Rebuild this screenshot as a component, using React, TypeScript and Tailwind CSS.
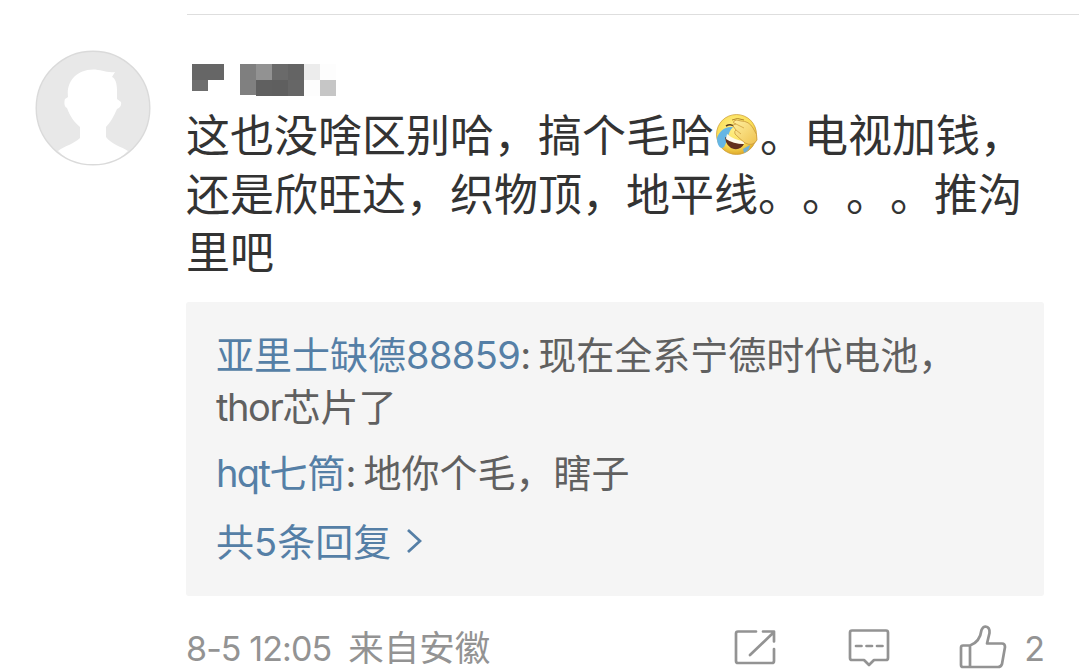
import type { ReactNode } from 'react';

interface ReplyProps {
  name: ReactNode;
  children: ReactNode;
}

// Shades of the pixelated user name, two rows of 16px cells
const NAME_CELLS = [
  'bg-[#666666]', 'bg-[#666666]', 'bg-white', 'bg-[#7f7f7f]', 'bg-[#929292]', 'bg-[#6a6a6a]', 'bg-[#646464]', 'bg-[#ececec]', 'bg-[#fdfdfd]',
  'bg-[#6e6e6e] h-[11px]', 'bg-white', 'bg-white', 'bg-[#808080] h-[15px]', 'bg-[#606060]', 'bg-[#5f5f5f]', 'bg-[#666666]', 'bg-[#fdfdfd]', 'bg-[#c6c6c6]',
];

function Avatar() {
  return (
    <svg className="w-[116px] h-[116px] shrink-0" viewBox="0 0 116 116" aria-label="avatar">
      <circle cx="58" cy="58" r="56.8" fill="#e8e8e8" />
      <path
        d="M23 101C29 96 39 94 45 88V77C39 72 35 66 32 58C29 57 29 52 30 49L33 47C31 32 41 20 58 19.5C66 19.5 71 23 80 22L77 27C80 28 82 33 82 40V49L86 52Q87 57 82 59C79 66 75 73 71 77V87C76 94 87 97 93 101C73 121 43 121 23 101Z"
        fill="#fff"
      />
      <circle cx="58" cy="58" r="56.8" fill="none" stroke="#dadada" strokeWidth="1.4" />
    </svg>
  );
}

function FacepalmEmoji() {
  return (
    <svg className="w-[44px] h-[44px] inline-block align-top mt-[8px] ml-px mr-px" viewBox="0 0 44 44" aria-label="允悲">
      <defs>
        <radialGradient id="face" cx="45%" cy="35%" r="65%">
          <stop offset="0" stopColor="#fff08a" />
          <stop offset=".7" stopColor="#fadd55" />
          <stop offset="1" stopColor="#dfaa2b" />
        </radialGradient>
        <linearGradient id="hand" x1="0" y1="0" x2="1" y2="1">
          <stop offset="0" stopColor="#fff0a0" />
          <stop offset="1" stopColor="#efc24f" />
        </linearGradient>
      </defs>
      <circle cx="21.5" cy="22.5" r="20" fill="url(#face)" stroke="#c99a35" strokeWidth=".7" />
      <path d="M17 8Q22 5 29 8" fill="none" stroke="#a67a24" strokeWidth=".9" />
      <path d="M18 15C9 14 4 20 2 26C2 34 6 38 9 35C13 29 12 21 18 15Z" fill="#65b6e4" />
      <path d="M28 37L35 33Q35 38 29 41Z" fill="#70afd4" />
      <path d="M10 25Q19 31 29 32Q26 38 19 37Q11 35 10 25Z" fill="#64301c" />
      <path d="M12 22Q19 28 29 29V32Q18 32 11 27Z" fill="#fffbea" />
      <path d="M11 14Q16 11 20 15" fill="none" stroke="#5b3c18" strokeWidth="1.6" />
      <path
        d="M19 9Q21 7 26 9Q34 9 38 16Q43 23 42 28Q38 35 30 31Q25 27 20 22Q19 19 21 18L18 14Q18 12 21 12Q17 11 19 9Z"
        fill="url(#hand)"
        stroke="#c9973b"
        strokeWidth=".8"
      />
      <path d="M21 12L29 16M21 18L26 22" stroke="#cf9f40" strokeWidth=".8" />
    </svg>
  );
}

function Reply({ name, children }: ReplyProps) {
  return (
    <div className="text-[38px] leading-[52px] text-[#606060] whitespace-nowrap">
      <span className="text-[#557fa6]">{name}</span>
      <span className="inline-block w-[18px] font-[Inter] leading-none tracking-[-1px]">:</span>
      {children}
    </div>
  );
}

function Actions() {
  return (
    <div className="flex items-start text-[#939393]">
      <svg className="w-[42px] h-[36px] mt-[6px]" viewBox="0 0 42 36" fill="none" stroke="currentColor" strokeWidth="2.7" strokeLinecap="round" strokeLinejoin="round">
        <path d="M22 2.5H4Q2 2.5 2 4.5V32Q2 34 4 34H38Q40 34 40 32V20M29 2.5H40V12.5M39 4L16 26" />
      </svg>
      <svg className="w-[42px] h-[40px] ml-[72px] mt-[5px]" viewBox="0 0 42 40" fill="none" stroke="currentColor" strokeWidth="2.7" strokeLinecap="round" strokeLinejoin="round">
        <path d="M4 2.5H38Q40 2.5 40 4.5V30Q40 32 38 32H26L21 37L16 32H4Q2 32 2 30V4.5Q2 2.5 4 2.5Z" />
        <path d="M8 18H13.5M18.5 18H24M29 18H34.5" />
      </svg>
      <svg className="w-[48px] h-[46px] ml-[69px] mt-px" viewBox="0 0 48 46" fill="none" stroke="currentColor" strokeWidth="2.7" strokeLinecap="round" strokeLinejoin="round">
        <path d="M11 21.5H4Q2 21.5 2 23.5V41Q2 43 4 43H39Q42 43 43 40L46 23Q46 19.5 43 19.5H28L30.5 9Q31 3 26.5 2.5Q24 2.5 22.5 6Q21 18 11 21.5V43" />
      </svg>
      <span className="ml-[17px] font-[Inter] text-[34px] leading-[52px] tracking-[-1px]">2</span>
    </div>
  );
}

export default function App() {
  return (
    <main className="w-[1079px] h-[669px] overflow-hidden bg-white font-['Noto_Sans_CJK_SC',sans-serif] [text-spacing-trim:space-all]">
      <div className="ml-[187px] mt-[14px] h-px bg-[#dedede]" />
      <div className="flex pl-[35px]">
        <div className="pt-[35px] w-[151px] shrink-0">
          <Avatar />
        </div>
        <article className="w-[858px] shrink-0">
          <div className="grid grid-cols-[repeat(9,16px)] grid-rows-[16px_16px] ml-[6px] mt-[49px]" aria-hidden="true">
            {NAME_CELLS.map((shade, i) => (
              <span key={i} className={shade} />
            ))}
          </div>

          <div className="mt-[8px] text-[44px] leading-[58.5px] text-[#333333] whitespace-nowrap">
            <p>
              这也没啥区别哈，搞个毛哈<FacepalmEmoji />。电视加钱，
            </p>
            <p>还是欣旺达，织物顶，地平线。。。。推沟</p>
            <p>里吧</p>
          </div>

          <section className="mt-[22px] h-[294px] bg-[#f5f5f5] rounded-[3px] pl-[30px] pt-[25px]">
            <Reply name={<>亚里士缺德<span className="font-[Inter] leading-none tracking-[-0.6px]">88859</span></>}>
              现在全系宁德时代电池，
              <br />
              <span className="font-[Inter] leading-none tracking-[-1.4px]">thor</span>芯片了
            </Reply>
            <div className="mt-[14px]">
              <Reply name={<><span className="font-[Inter] leading-none tracking-[-1.6px]">hqt</span>七筒</>}>
                地你个毛，瞎子
              </Reply>
            </div>
            <div className="mt-[17px] flex items-center text-[38px] leading-[52px] text-[#557fa6]">
              <span>共<span className="font-[Inter] leading-none">5</span>条回复</span>
              <svg className="w-[16px] h-[28px] ml-[15px] mt-[2px]" viewBox="0 0 16 28" fill="none" stroke="currentColor" strokeWidth="2.8">
                <path d="M2 3L14 14L2 25" />
              </svg>
            </div>
          </section>

          <footer className="mt-[27px] h-[46px] flex justify-between text-[#939393] whitespace-nowrap">
            <div className="flex">
              <span className="font-[Inter] text-[34px] leading-[52px] tracking-[-0.9px]">8-5 12:05</span>
              <span className="ml-[17px] text-[35.5px] leading-[46px]">来自安徽</span>
            </div>
            <Actions />
          </footer>
        </article>
      </div>
    </main>
  );
}
